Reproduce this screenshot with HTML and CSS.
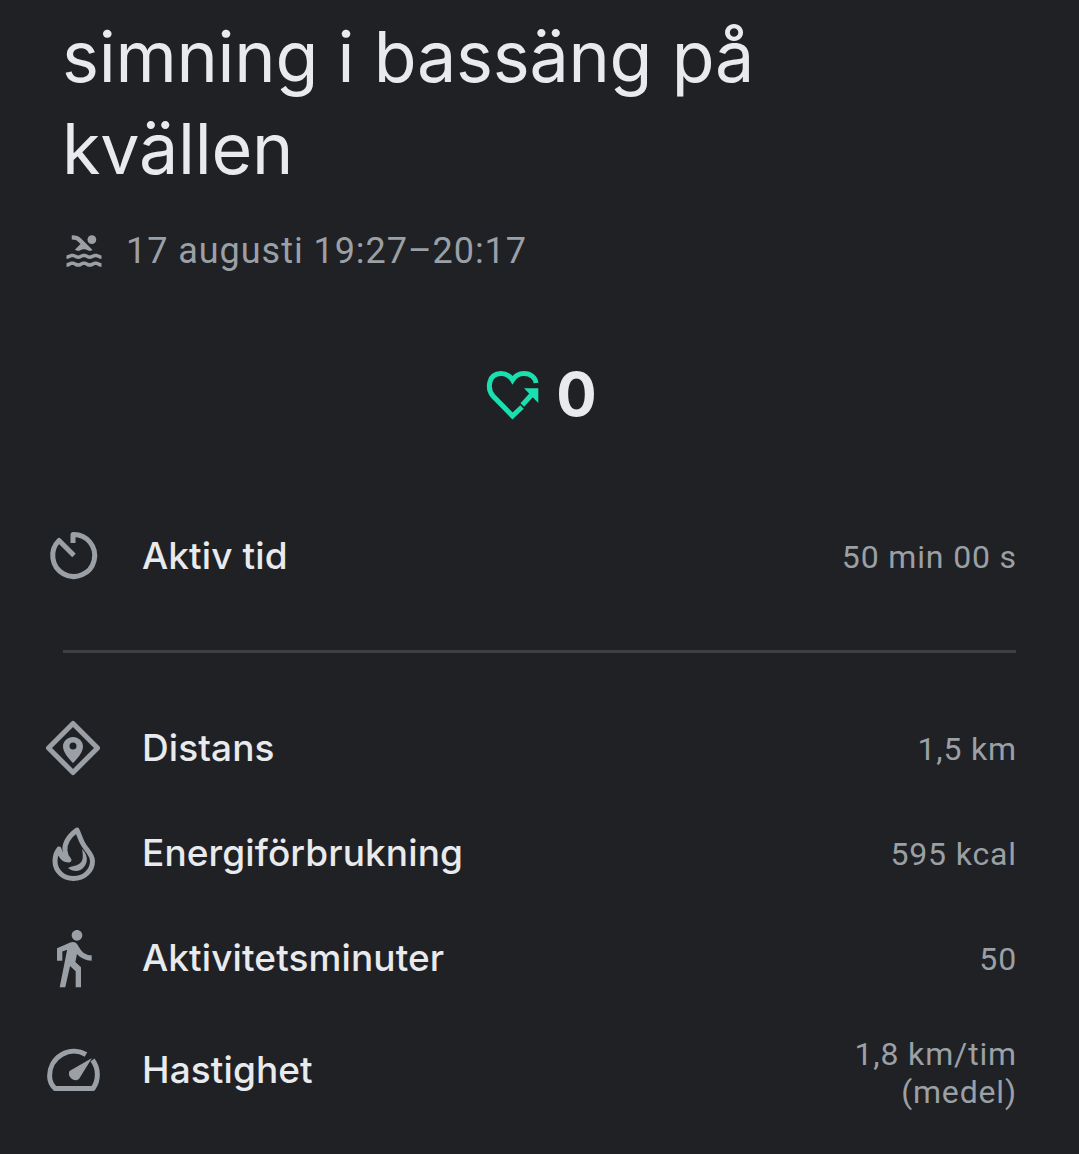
FILE: index.html
```html
<!DOCTYPE html>
<html lang="sv">
    <head>
        <meta charset="UTF-8" />
        <meta name="viewport" content="width=device-width, initial-scale=1.0" />
        <title>simning i bassäng på kvällen</title>
        <link rel="stylesheet" href="styles.css">
    </head>
    <body>
        <main class="session">
            <h1 class="session-title">simning i bassäng på kvällen</h1>
            <div class="session-meta">
                <svg class="meta-icon" viewBox="0 0 24 24" width="42" height="42">
                    <path class="fill" d="M22 21c-1.11 0-1.73-.37-2.18-.64-.37-.22-.6-.36-1.15-.36-.56 0-.78.13-1.15.36-.46.27-1.07.64-2.18.64s-1.73-.37-2.18-.64c-.37-.22-.6-.36-1.15-.36-.56 0-.78.13-1.15.36-.46.27-1.08.64-2.19.64-1.11 0-1.73-.37-2.18-.64-.37-.23-.6-.36-1.15-.36s-.78.13-1.15.36c-.46.27-1.08.64-2.19.64v-2c.56 0 .78-.13 1.15-.36.46-.27 1.08-.64 2.19-.64s1.73.37 2.18.64c.37.23.59.36 1.15.36.56 0 .78-.13 1.15-.36.46-.27 1.08-.64 2.19-.64 1.11 0 1.73.37 2.18.64.37.22.6.36 1.15.36s.78-.13 1.15-.36c.45-.27 1.07-.64 2.18-.64s1.73.37 2.18.64c.37.23.59.36 1.15.36v2zm0-4.5c-1.11 0-1.73-.37-2.18-.64-.37-.22-.6-.36-1.15-.36-.56 0-.78.13-1.15.36-.45.27-1.07.64-2.18.64s-1.73-.37-2.18-.64c-.37-.22-.6-.36-1.15-.36-.56 0-.78.13-1.15.36-.45.27-1.07.64-2.18.64s-1.73-.37-2.18-.64c-.37-.22-.6-.36-1.15-.36s-.78.13-1.15.36c-.47.27-1.09.64-2.2.64v-2c.56 0 .78-.13 1.15-.36.45-.27 1.07-.64 2.18-.64s1.73.37 2.18.64c.37.22.6.36 1.15.36.56 0 .78-.13 1.15-.36.45-.27 1.07-.64 2.18-.64s1.73.37 2.18.64c.37.22.6.36 1.15.36s.78-.13 1.15-.36c.45-.27 1.07-.64 2.18-.64s1.73.37 2.18.64c.36.22.6.36 1.15.36v2zM8.67 12c.56 0 .78-.13 1.15-.36.46-.27 1.08-.64 2.19-.64 1.11 0 1.73.37 2.18.64.37.22.6.36 1.15.36s.78-.13 1.15-.36c.12-.07.26-.15.41-.23L10.48 5C8.93 3.45 7.5 2.99 5 3v2.5c1.82-.01 2.89.39 4 1.5l1 1-3.25 3.25c.31.12.56.27.77.39.37.23.59.36 1.15.36z"/>
                    <circle class="fill" cx="16.5" cy="5.5" r="2.5"/>
                </svg>
                <span>17 augusti 19:27–20:17</span>
            </div>
            <div class="points">
                <svg viewBox="0 0 56 52" width="56" height="52">
                    <path class="heart" d="M38 39 28.5 48 9 28C3 21 4 5.5 17 5.5c5 0 9 2.5 11.5 6.5C31 8 35 5.5 40 5.5c7 0 11.5 4.5 12 9.5"/>
                    <path class="heart" d="M48.3 26 38.3 37"/>
                    <path class="arrow-head" d="M40 20.3h14.3V35z"/>
                </svg>
                <span class="points-value">0</span>
            </div>
            <section class="stats">
                <div class="stat stat-active">
                    <svg class="stat-icon" viewBox="0 0 56 56" width="56" height="56">
                        <path class="line" d="M28 15V6.5A21 21 0 1 1 14 12.5L29 27.5"/>
                    </svg>
                    <span class="stat-label">Aktiv tid</span>
                    <span class="stat-value">50 min 00 s</span>
                </div>
                <hr class="divider">
                <div class="stat stat-distance">
                    <svg class="stat-icon" viewBox="0 0 56 56" width="56" height="56">
                        <path class="line" d="M28 3.5 52.5 28 28 52.5 3.5 28z"/>
                        <path class="fill" fill-rule="evenodd" d="M28 17c5.5 0 10 4.3 10 9.5 0 6-6 12.5-10 16.5-4-4-10-10.5-10-16.5 0-5.2 4.5-9.5 10-9.500zm0 5.500a3.500 3.500 0 1 0 0 7 3.500 3.500 0 0 0 0-7z"/>
                    </svg>
                    <span class="stat-label">Distans</span>
                    <span class="stat-value">1,5 km</span>
                </div>
                <div class="stat stat-energy">
                    <svg class="stat-icon" viewBox="0 0 56 56" width="56" height="56">
                        <path class="line" d="M32 5C24 11 19 18 20 26c.5 4 2 7 4 9-5 0-8.500-3-10-11-3 4-4 8-4 12 0 10 8 17.500 18.500 17.500S47.500 46 47.500 36c0-7-6.500-11-10-18-2.500-5-3.500-9-5.500-13z"/>
                        <path class="fill" d="M37 24c1 6 2 12-3 15-3 2-7 2-11 4 5 4 12 4 16-1 5-6 3-13-2-18z"/>
                    </svg>
                    <span class="stat-label">Energiförbrukning</span>
                    <span class="stat-value">595 kcal</span>
                </div>
                <div class="stat stat-minutes">
                    <svg class="stat-icon" viewBox="1.5 1.5 21 21" width="56" height="56">
                        <path class="fill" d="M13.5 5.5c1.1 0 2-.9 2-2s-.9-2-2-2-2 .9-2 2 .9 2 2 2zM9.8 8.9 7 23h2.100l1.800-8 2.100 2v6h2v-7.500l-2.100-2 .6-3C14.800 12 16.800 13 19 13v-2c-1.900 0-3.500-1-4.300-2.400l-1-1.600c-.4-.6-1-1-1.700-1-.3 0-.5.1-.8.1L6 8.300V13h2V9.600l1.800-.7"/>
                    </svg>
                    <span class="stat-label">Aktivitetsminuter</span>
                    <span class="stat-value">50</span>
                </div>
                <div class="stat stat-speed">
                    <svg class="stat-icon" viewBox="0 0 56 56" width="56" height="56">
                        <path class="line" d="M41 11.5A24.4 24.4 0 0 0 4.6 32.700C4.600 37 6.500 42 10 45.500h38A24.400 24.400 0 0 0 47.500 17"/>
                        <path class="fill" d="M47 15 34 36a6.500 6.500 0 0 1-9.500-8z"/>
                    </svg>
                    <span class="stat-label">Hastighet</span>
                    <span class="stat-value">1,8 km/tim<br>(medel)</span>
                </div>
            </section>
        </main>
    </body>
</html>
```

FILE: styles.css
```css
* {
    box-sizing: border-box;
}

html,
body {
    background: #202124;
    color: #e8eaed;
}

body {
    margin: 0;
    font-family: Roboto, "Liberation Sans", sans-serif;
    height: 1154px;
    overflow: hidden;
}

.session {
    padding: 11px 63px 0 45px;
}

.session-title {
    margin: 0 0 0 17px;
    max-width: 740px;
    font-family: Inter, sans-serif;
    font-size: 70px;
    font-weight: 400;
    line-height: 92px;
    letter-spacing: -0.25px;
}

.session-meta {
    display: flex;
    align-items: center;
    gap: 21px;
    margin: 35px 0 0 18px;
    height: 42px;
    font-size: 36px;
    letter-spacing: 0.96px;
    color: #9aa0a6;
}

.points {
    display: flex;
    justify-content: center;
    align-items: center;
    gap: 16px;
    margin: 87px 0 0 0;
    padding-left: 20px;
}

.points-value {
    font-family: Inter, sans-serif;
    font-size: 60px;
    font-weight: 700;
    line-height: 70px;
}

.fill {
    fill: #9aa0a6;
}

.line {
    fill: none;
    stroke: #9aa0a6;
    stroke-width: 5;
    stroke-linejoin: round;
}

.heart {
    fill: none;
    stroke: #1adfae;
    stroke-width: 5;
}

.arrow-head {
    fill: #1adfae;
}

.stats {
    margin-top: 99px;
}

.stat {
    display: flex;
    align-items: center;
    gap: 41px;
}

.stat-icon {
    flex: none;
    overflow: visible;
}

.stat-label {
    flex: 1;
    padding-bottom: 2px;
    font-family: Inter, sans-serif;
    font-size: 37px;
    font-weight: 500;
    letter-spacing: 0.1px;
    color: #e8eaed;
}

.stat-value {
    margin-right: -1px;
    padding-top: 2px;
    font-size: 32px;
    line-height: 38px;
    letter-spacing: 0.85px;
    color: #9aa0a6;
    text-align: right;
}

.stat-active {
    height: 56px;
}

.divider {
    height: 3px;
    margin: 66px 0 67px 18px;
    border: 0;
    background: #3c4043;
}

.stat-distance {
    height: 56px;
    margin-bottom: 49px;
}

.stat-energy {
    height: 56px;
    margin-bottom: 49px;
}

.stat-minutes {
    height: 56px;
    margin-bottom: 46px;
}

.stat-speed {
    height: 76px;
}

.stat-speed .stat-icon {
    margin-top: 2px;
}

.stat-speed .stat-value {
    padding-top: 6px;
}
```
